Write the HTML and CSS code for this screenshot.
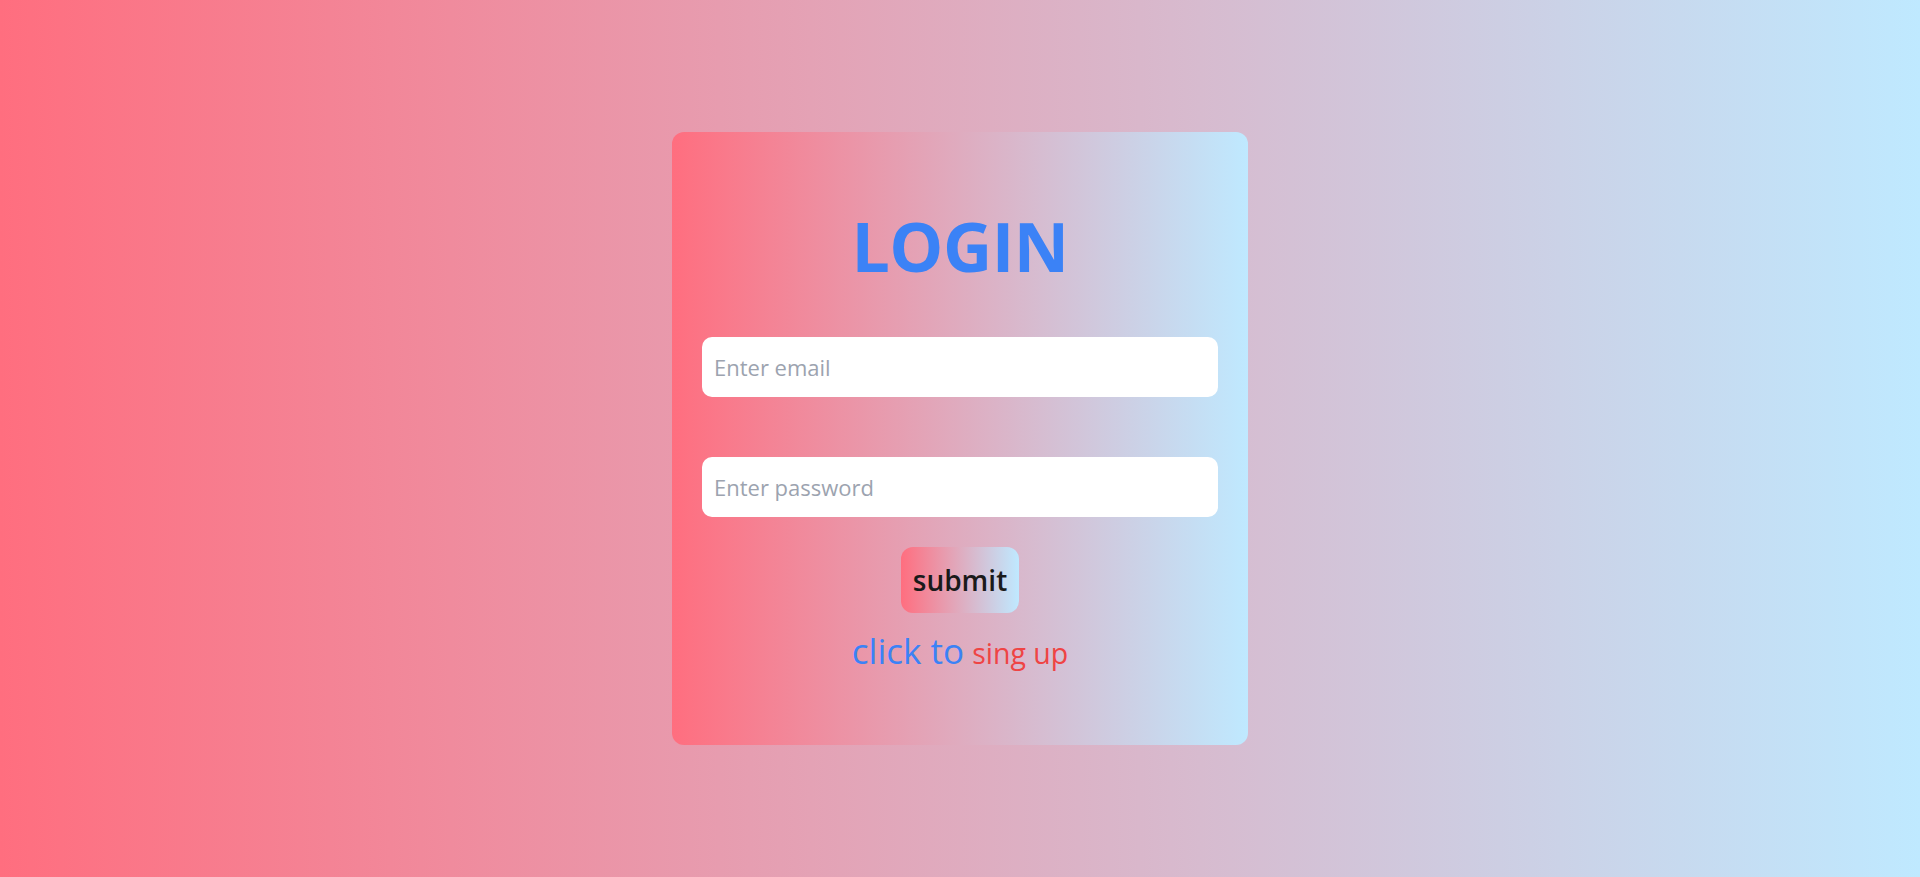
FILE: index.html
```html
<!DOCTYPE html>
<html lang="en">
<head>
<meta charset="utf-8">
<title>Login</title>
<link rel="stylesheet" href="styles.css">
</head>
<body>
<main class="page">
  <form class="card">
    <h1 class="title">LOGIN</h1>
    <input class="field" type="email" placeholder="Enter email">
    <input class="field field-password" type="password" placeholder="Enter password">
    <button class="submit" type="button">submit</button>
    <p class="signup"><span class="signup-lead">click to</span> <a class="signup-link" href="#">sing up</a></p>
  </form>
</main>
</body>
</html>
```

FILE: styles.css
```css
* { box-sizing: border-box; }
html, body { margin: 0; padding: 0; height: 100%; }
body {
  font-family: "Open Sans", "Noto Sans", sans-serif;
  background: linear-gradient(to right, #ff6e7f, #bfe9ff);
}
.page {
  height: 877px;
  display: flex;
  align-items: center;
  justify-content: center;
}
.card {
  width: 576px;
  height: 613px;
  padding: 0 30px;
  border-radius: 12px;
  background: linear-gradient(to right, #ff6e7f, #bfe9ff);
  display: flex;
  flex-direction: column;
  align-items: center;
}
.title {
  margin: 74px 0 0;
  font-size: 68px;
  line-height: 80px;
  font-weight: 700;
  color: #3b82f6;
  letter-spacing: -0.5px;
}
.field {
  width: 100%;
  height: 60px;
  margin-top: 51px;
  border: none;
  border-radius: 10px;
  background: #fff;
  padding: 0 12px;
  font-family: inherit;
  font-size: 22px;
  color: #111;
  outline: none;
}
.field::placeholder { color: #9ca3af; }
.field-password { margin-top: 60px; }
.submit {
  margin-top: 30px;
  height: 66px;
  width: 118px;
  padding: 0;
  border: none;
  border-radius: 12px;
  background: linear-gradient(to right, #ff6e7f, #bfe9ff);
  font-family: inherit;
  font-size: 28px;
  font-weight: 600;
  color: #1a1a1a;
}
.signup {
  margin: 16px 0 0;
  line-height: 44px;
}
.signup-lead { font-size: 35px; color: #3b82f6; margin-right: 4px; }
.signup-link { font-size: 28.5px; color: #ef4444; text-decoration: none; }
```
